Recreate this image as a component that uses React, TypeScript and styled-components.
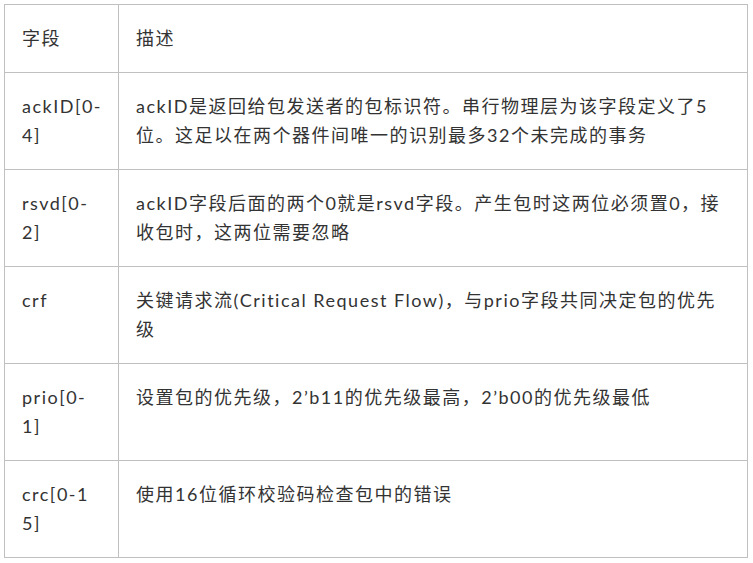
import styled, { createGlobalStyle } from "styled-components";

const GlobalStyle = createGlobalStyle`
  body {
    margin: 0;
    background: #ffffff;
  }
`;

interface Row {
  field: string;
  desc: string;
}

const rows: Row[] = [
  {
    field: "ackID[0-4]",
    desc: "ackID是返回给包发送者的包标识符。串行物理层为该字段定义了5位。这足以在两个器件间唯一的识别最多32个未完成的事务",
  },
  {
    field: "rsvd[0-2]",
    desc: "ackID字段后面的两个0就是rsvd字段。产生包时这两位必须置0，接收包时，这两位需要忽略",
  },
  {
    field: "crf",
    desc: "关键请求流(Critical Request Flow)，与prio字段共同决定包的优先级",
  },
  {
    field: "prio[0-1]",
    desc: "设置包的优先级，2’b11的优先级最高，2’b00的优先级最低",
  },
  {
    field: "crc[0-15]",
    desc: "使用16位循环校验码检查包中的错误",
  },
];

function App() {
  return (
    <Page>
      <GlobalStyle />
      <Table>
        <colgroup>
          <col style={{ width: 114 }} />
          <col />
        </colgroup>
        <tbody>
          <tr>
            <Cell>字段</Cell>
            <Cell>描述</Cell>
          </tr>
          {rows.map((row) => (
            <tr key={row.field}>
              <Cell>{row.field}</Cell>
              <Cell>{row.desc}</Cell>
            </tr>
          ))}
        </tbody>
      </Table>
    </Page>
  );
}

export default App;

const Page = styled.div`
  padding: 4px;
`;

const Table = styled.table`
  width: 744px;
  table-layout: fixed;
  border-collapse: collapse;
  font-family: Lato, "Noto Sans CJK SC", sans-serif;
  font-size: 18px;
  letter-spacing: 1.5px;
  line-height: 29.5px;
  color: #333333;
`;

const Cell = styled.td`
  border: 1px solid #c0c0c0;
  padding: 19px 14px 18px 17px;
  vertical-align: top;
  text-align: left;
  word-break: break-all;
`;
